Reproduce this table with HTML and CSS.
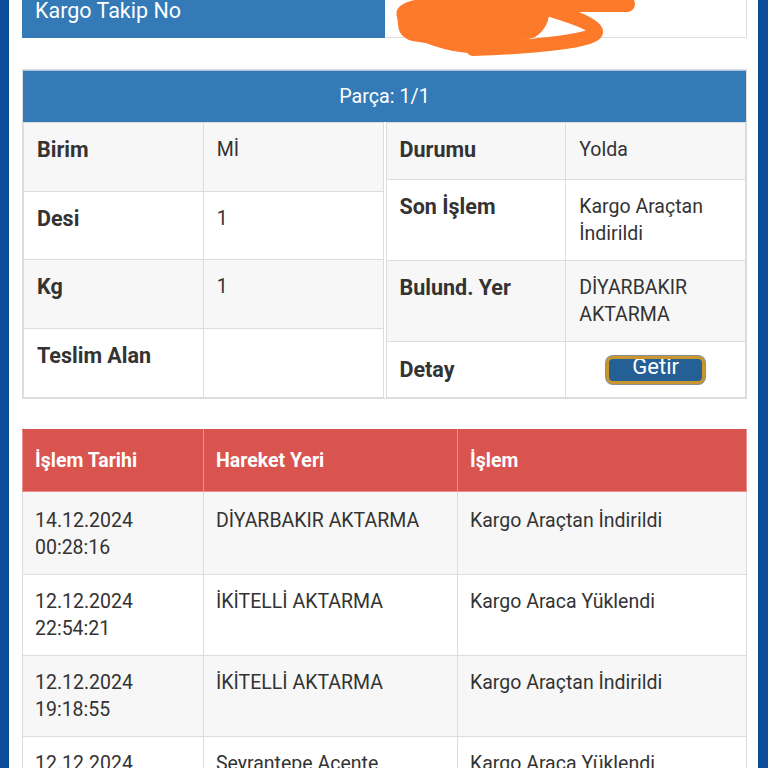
FILE: index.html
```html
<!DOCTYPE html>
<html lang="tr">
<head>
<meta charset="utf-8">
<title>Kargo Takip</title>
<link rel="stylesheet" href="styles.css">
</head>
<body>
<div class="frame">
  <div class="page">
    <div class="takip-wrap">
      <table class="takip">
        <tr>
          <td class="takip-label">Kargo Takip No</td>
          <td class="takip-value"></td>
        </tr>
      </table>
      <svg class="scribble" width="260" height="64" viewBox="0 0 260 64">
        <path d="M4 20 C0 6 20 0 60 0 L150 0 C160 10 158 30 142 40 C112 50 40 50 16 43 C3 37 6 28 4 20 Z" fill="#fd7a2b"/>
        <path d="M130 7 L234 7" stroke="#fd7a2b" stroke-width="16" stroke-linecap="round" fill="none"/>
        <path d="M148 10 C175 18 200 26 203 34 C205 44 140 50 80 52" stroke="#fd7a2b" stroke-width="14" stroke-linecap="round" fill="none"/>
        <path d="M30 38 C50 48 70 50 90 51" stroke="#fd7a2b" stroke-width="12" stroke-linecap="round" fill="none"/>
      </svg>
    </div>

    <section class="parca">
      <div class="parca-head">Parça: 1/1</div>
      <div class="parca-grid">
        <table class="detail detail-left">
          <tr class="striped"><th>Birim</th><td>Mİ</td></tr>
          <tr><th>Desi</th><td>1</td></tr>
          <tr class="striped"><th>Kg</th><td>1</td></tr>
          <tr><th>Teslim Alan</th><td></td></tr>
        </table>
        <table class="detail detail-right">
          <tr class="striped row-durum"><th>Durumu</th><td>Yolda</td></tr>
          <tr class="row-son"><th>Son İşlem</th><td>Kargo Araçtan İndirildi</td></tr>
          <tr class="striped row-yer"><th>Bulund. Yer</th><td>DİYARBAKIR AKTARMA</td></tr>
          <tr class="row-detay"><th>Detay</th><td class="center"><span class="getir">Getir</span></td></tr>
        </table>
      </div>
    </section>

    <table class="history">
      <colgroup>
        <col class="c1"><col class="c2"><col class="c3">
      </colgroup>
      <thead>
        <tr><th>İşlem Tarihi</th><th>Hareket Yeri</th><th>İşlem</th></tr>
      </thead>
      <tbody>
        <tr class="striped first"><td>14.12.2024<br>00:28:16</td><td>DİYARBAKIR AKTARMA</td><td>Kargo Araçtan İndirildi</td></tr>
        <tr><td>12.12.2024<br>22:54:21</td><td>İKİTELLİ AKTARMA</td><td>Kargo Araca Yüklendi</td></tr>
        <tr class="striped"><td>12.12.2024<br>19:18:55</td><td>İKİTELLİ AKTARMA</td><td>Kargo Araçtan İndirildi</td></tr>
        <tr><td>12.12.2024<br>17:40:12</td><td>Seyrantepe Acente</td><td>Kargo Araca Yüklendi</td></tr>
      </tbody>
    </table>
  </div>
</div>
</body>
</html>
```

FILE: styles.css
```css
* { box-sizing: border-box; }
html, body {
  margin: 0;
  padding: 0;
  height: 768px;
  overflow: hidden;
  font-family: Roboto, "Noto Sans", "Liberation Sans", sans-serif;
  color: #333;
}
.frame {
  height: 768px;
  background: #0b4d98;
  padding: 0 10px 0 9px;
}
.page {
  height: 100%;
  background: #fff;
  padding: 0 11px 0 13px;
  overflow: hidden;
}
table {
  border-collapse: collapse;
  width: 100%;
}
.takip-wrap {
  position: relative;
  margin-top: -17px;
}
.takip td {
  font-size: 21.5px;
  line-height: 27px;
  padding: 13px 12px;
  border: 1px solid #ddd;
}
.takip-label {
  width: 50%;
  background: #337ab7;
  color: #fff;
  border-color: #337ab7 !important;
}
.scribble {
  position: absolute;
  left: 371px;
  top: 14px;
}
.parca {
  margin-top: 31px;
  border: 1px solid #ddd;
}
.parca-head {
  background: #337ab7;
  color: #fff;
  text-align: center;
  font-size: 19.7px;
  line-height: 27px;
  padding: 12px 0 12px;
  border-top: 1px solid #a9c7e3;
}
.parca-grid {
  display: grid;
  grid-template-columns: 1fr 1fr;
  column-gap: 2px;
}
.detail {
  height: 100%;
  table-layout: fixed;
}
.detail th, .detail td {
  width: 50%;
  border: 1px solid #ddd;
  font-size: 19.5px;
  line-height: 27px;
  padding: 13px 13px;
  text-align: left;
  vertical-align: top;
}
.detail th { font-weight: 700; font-size: 21.5px; }
.detail td.center { text-align: center; vertical-align: middle; }
.detail-right .row-durum th { height: 57px; }
.detail-right .row-detay th { padding-top: 13px; padding-bottom: 12px; vertical-align: middle; }
.striped th, .striped td { background: #f7f7f7; }
.getir {
  display: inline-block;
  width: 99px;
  height: 28px;
  border-radius: 7px;
  border: 3px solid #c8952f;
  box-shadow: 0 0 0 1px #8a8f99;
  background: #245f96;
  color: #fff;
  font-size: 22px;
  line-height: 16px;
  overflow: hidden;
  vertical-align: middle;
}
.history {
  margin-top: 30px;
  table-layout: fixed;
}
.history .c1 { width: 181px; }
.history .c2 { width: 254px; }
.history th {
  background: #d9534f;
  color: #fff;
  font-weight: 700;
  text-align: left;
  font-size: 19.5px;
  line-height: 27px;
  padding: 17px 12px 17px 12px;
  border: 1px solid #ea8f8c;
  border-top-color: #d9534f;
}
.history td {
  font-size: 19.5px;
  line-height: 27px;
  padding: 13px 12px;
  border: 1px solid #ddd;
  vertical-align: top;
}
.history .first td { padding-top: 15px; padding-bottom: 13px; }
```
